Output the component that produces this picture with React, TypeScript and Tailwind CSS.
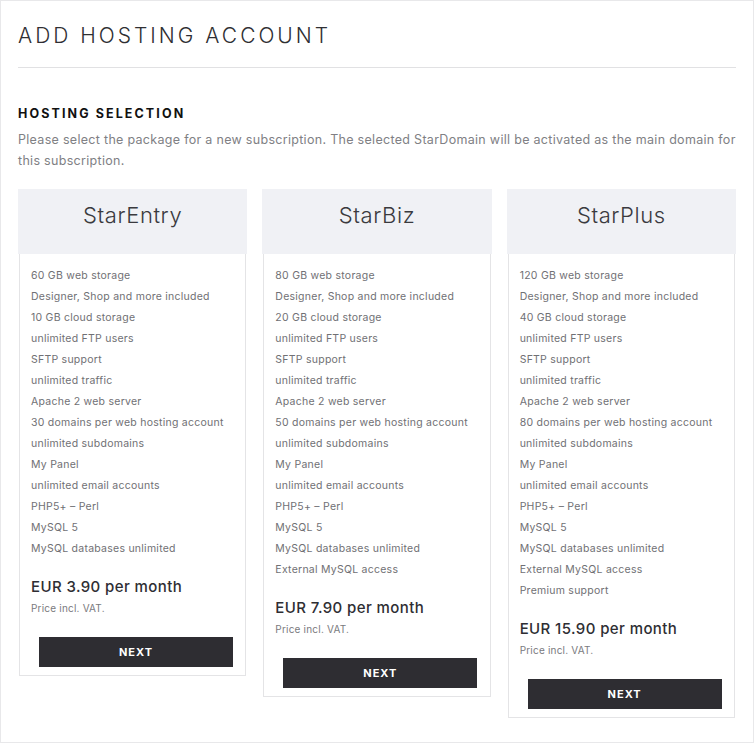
type Plan = {
  name: string,
  features: Array<string>,
  price: string
}

const plans: Array<Plan> = [
  {
    name: "StarEntry",
    features: [
      "60 GB web storage",
      "Designer, Shop and more included",
      "10 GB cloud storage",
      "unlimited FTP users",
      "SFTP support",
      "unlimited traffic",
      "Apache 2 web server",
      "30 domains per web hosting account",
      "unlimited subdomains",
      "My Panel",
      "unlimited email accounts",
      "PHP5+ – Perl",
      "MySQL 5",
      "MySQL databases unlimited",
    ],
    price: "EUR 3.90 per month",
  },
  {
    name: "StarBiz",
    features: [
      "80 GB web storage",
      "Designer, Shop and more included",
      "20 GB cloud storage",
      "unlimited FTP users",
      "SFTP support",
      "unlimited traffic",
      "Apache 2 web server",
      "50 domains per web hosting account",
      "unlimited subdomains",
      "My Panel",
      "unlimited email accounts",
      "PHP5+ – Perl",
      "MySQL 5",
      "MySQL databases unlimited",
      "External MySQL access",
    ],
    price: "EUR 7.90 per month",
  },
  {
    name: "StarPlus",
    features: [
      "120 GB web storage",
      "Designer, Shop and more included",
      "40 GB cloud storage",
      "unlimited FTP users",
      "SFTP support",
      "unlimited traffic",
      "Apache 2 web server",
      "80 domains per web hosting account",
      "unlimited subdomains",
      "My Panel",
      "unlimited email accounts",
      "PHP5+ – Perl",
      "MySQL 5",
      "MySQL databases unlimited",
      "External MySQL access",
      "Premium support",
    ],
    price: "EUR 15.90 per month",
  },
]

function PlanCard({ plan }: { plan: Plan }) {
  return (
    <div className="w-[230px] flex flex-col">
      <div className="h-[65px] bg-[#f0f1f5] flex justify-center pt-[12px]">
        <span className="text-[22px] leading-[28px] font-light text-[#3a3a3e] tracking-[0.6px]">{plan.name}</span>
      </div>
      <div className="border border-t-0 border-[#e4e4e6] mx-px pt-[11px] pb-[8px]">
        <ul className="pl-[11px]">
          {plan.features.map((feature) => (
            <li key={feature} className="text-[10.5px] leading-[21px] text-[#707074] tracking-[0.25px]">
              {feature}
            </li>
          ))}
        </ul>
        <p className="pl-[11px] mt-[18px] text-[15px] leading-[20px] font-medium text-[#2e2e33] tracking-[0.4px]">
          {plan.price}
        </p>
        <p className="pl-[11px] text-[10px] leading-[22px] text-[#7a7a7e] tracking-[0.2px]">Price incl. VAT.</p>
        <button className="ml-[19px] mt-[18px] w-[194px] h-[30px] bg-[#2e2d32] text-white text-[11px] font-bold tracking-[1px]">
          NEXT
        </button>
      </div>
    </div>
  )
}

function App() {
  return (
    <div className="h-[743px] w-[754px] border border-[#e8e8ea] bg-white px-[17px] font-['Inter',sans-serif]">
      <h1 className="pt-[19px] h-[67px] text-[21px] font-light text-[#2f2f33] tracking-[3px] border-b border-[#e1e1e3]">
        ADD HOSTING ACCOUNT
      </h1>
      <h2 className="mt-[36px] text-[12.5px] font-bold text-[#111] tracking-[2.1px] leading-[20px]">HOSTING SELECTION</h2>
      <p className="mt-[5px] text-[12.5px] leading-[21px] text-[#808084] tracking-[0.3px]">
        Please select the package for a new subscription. The selected StarDomain will be activated as the main domain for
        this subscription.
      </p>
      <div className="mt-[18px] flex items-start gap-[15px]">
        {plans.map((plan) => (
          <PlanCard key={plan.name} plan={plan} />
        ))}
      </div>
    </div>
  )
}

export default App
